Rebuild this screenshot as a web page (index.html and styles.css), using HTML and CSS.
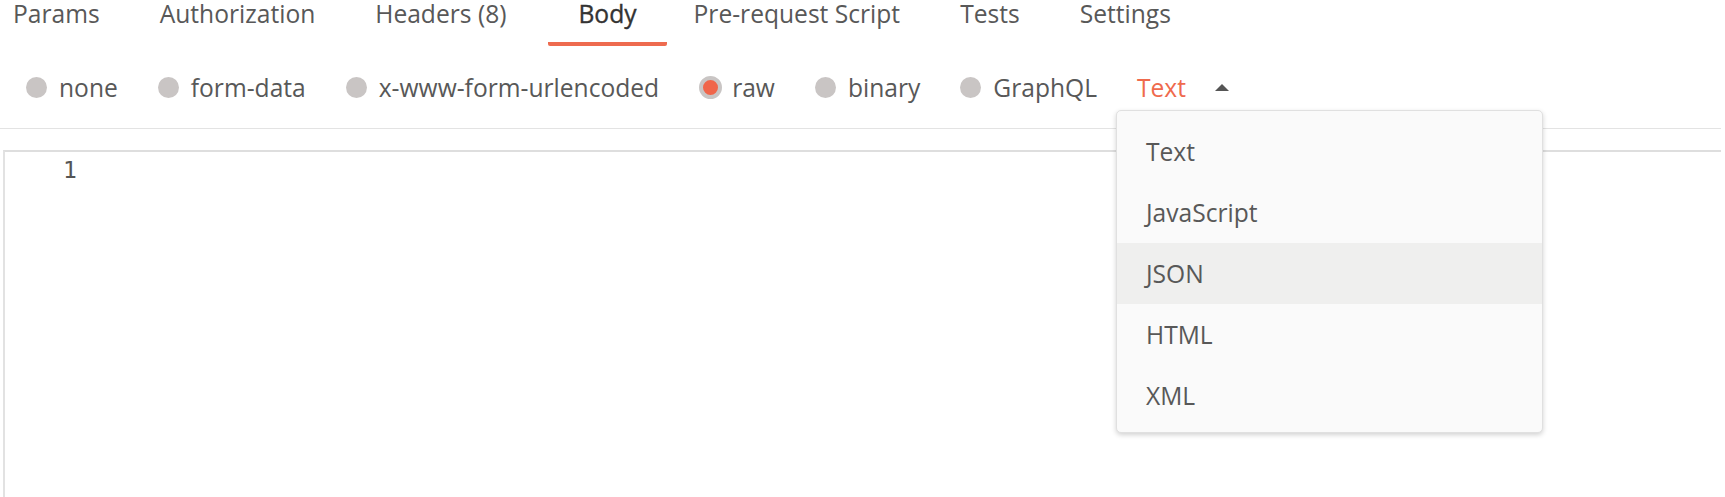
FILE: index.html
```html
<!DOCTYPE html>
<html>
<head>
<meta charset="utf-8">
<link rel="stylesheet" href="styles.css">
</head>
<body>
<div class="page">
  <nav class="tabs">
    <div class="tab">Params</div>
    <div class="tab">Authorization</div>
    <div class="tab">Headers (8)</div>
    <div class="tab active">Body</div>
    <div class="tab">Pre-request Script</div>
    <div class="tab">Tests</div>
    <div class="tab">Settings</div>
  </nav>
  <div class="body-types">
    <label class="opt"><span class="radio"></span>none</label>
    <label class="opt"><span class="radio"></span>form-data</label>
    <label class="opt"><span class="radio"></span>x-www-form-urlencoded</label>
    <label class="opt"><span class="radio checked"></span>raw</label>
    <label class="opt"><span class="radio"></span>binary</label>
    <label class="opt"><span class="radio"></span>GraphQL</label>
    <div class="lang">Text<span class="caret"></span></div>
  </div>
  <div class="rule"></div>
  <div class="editor">
    <div class="gutter">1</div>
  </div>
  <ul class="dropdown">
    <li>Text</li>
    <li>JavaScript</li>
    <li class="hl">JSON</li>
    <li>HTML</li>
    <li>XML</li>
  </ul>
</div>
</body>
</html>
```
FILE: styles.css
```css
html, body {
  margin: 0;
  padding: 0;
  background: #fff;
}
body {
  font-family: "Open Sans", "Noto Sans", sans-serif;
  font-size: 24.6px;
  color: #585858;
  width: 1725px;
  height: 497px;
  overflow: hidden;
}
.page {
  position: relative;
  height: 497px;
}
.tabs {
  display: flex;
  height: 46px;
}
.tab {
  padding: 0 30px;
  line-height: 28px;
  height: 46px;
  box-sizing: border-box;
  white-space: nowrap;
}
.tab:first-child {
  padding-left: 13px;
}
.tab.active {
  margin-left: 12px;
  margin-right: -3px;
  color: #333;
  -webkit-text-stroke: 0.35px #333;
  border-bottom: 4px solid #ee6b4f;
  border-radius: 0 0 2px 2px;
}
.body-types {
  display: flex;
  align-items: center;
  height: 82px;
  padding-left: 26px;
}
.opt {
  display: flex;
  align-items: center;
  margin-right: 40px;
  white-space: nowrap;
}
.radio {
  width: 21px;
  height: 21px;
  border-radius: 50%;
  background: #c9c5c4;
  margin-right: 12px;
  box-sizing: border-box;
}
.radio.checked {
  width: 23px;
  height: 23px;
  margin-right: 10px;
  border: 4px solid #c9c5c4;
  background: #f0654a;
}
.lang {
  display: flex;
  align-items: center;
  color: #ef6a4d;
}
.caret {
  margin-left: 29px;
  width: 0;
  height: 0;
  border-left: 7px solid transparent;
  border-right: 7px solid transparent;
  border-bottom: 7px solid #555;
}
.rule {
  height: 1px;
  margin-right: 4px;
  background: #e3e3e3;
}
.editor {
  margin: 21px 4px 0 3px;
  height: 360px;
  border-top: 2px solid #dedede;
  border-left: 2px solid #e2e2e2;
}
.gutter {
  padding-left: 58px;
  line-height: 36px;
  font-family: "DejaVu Sans Mono", "Liberation Mono", monospace;
  font-size: 23px;
  color: #555;
}
.dropdown {
  position: absolute;
  left: 1116px;
  top: 110px;
  width: 427px;
  height: 323px;
  box-sizing: border-box;
  margin: 0;
  padding: 10px 0 0;
  list-style: none;
  background: #fafafa;
  border: 1px solid #e0e0e0;
  border-radius: 5px;
  box-shadow: 0 2px 5px rgba(0, 0, 0, 0.18);
}
.dropdown li {
  height: 61px;
  line-height: 61px;
  padding-left: 29px;
}
.dropdown li.hl {
  background: #efefee;
}
```
